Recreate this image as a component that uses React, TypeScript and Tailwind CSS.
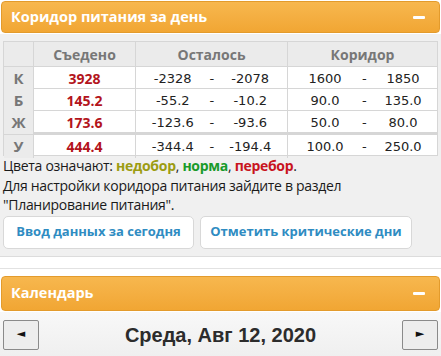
import React from "react"

type Row = { label: string; eaten: string; left: [string, string]; range: [string, string]; last?: boolean }

const rows: Row[] = [
  { label: "К", eaten: "3928", left: ["-2328", "-2078"], range: ["1600", "1850"] },
  { label: "Б", eaten: "145.2", left: ["-55.2", "-10.2"], range: ["90.0", "135.0"] },
  { label: "Ж", eaten: "173.6", left: ["-123.6", "-93.6"], range: ["50.0", "80.0"] },
  { label: "У", eaten: "444.4", left: ["-344.4", "-194.4"], range: ["100.0", "250.0"], last: true },
]

const body = { fontFamily: "'DejaVu Sans', Tahoma, sans-serif" }
const head = { fontFamily: "'Open Sans', 'DejaVu Sans', sans-serif" }

function PanelHeader({ title, tall }: { title: string; tall?: boolean }) {
  return (
    <div
      className={`mx-[1px] flex items-center justify-between rounded-[4px] border border-[#e39b2c] bg-gradient-to-b from-[#f7b74e] to-[#f1a633] pl-[9px] pr-[14px] ${tall ? "h-[35px]" : "h-[32px]"}`}
    >
      <span className="text-[14.5px] font-bold text-white" style={head}>
        {title}
      </span>
      <span className="block h-[3px] w-[12px] rounded-[1px] bg-white" />
    </div>
  )
}

function Pair({ a, b }: { a: string; b: string }) {
  return (
    <div className="flex h-full items-center">
      <span className="w-[74px] text-center">{a}</span>
      <span className="w-[4px] text-center">-</span>
      <span className="w-[74px] text-center">{b}</span>
    </div>
  )
}

export default function App() {
  return (
    <div className="h-[356px] w-[441px] overflow-hidden bg-white pt-[1px] text-[#222]" style={body}>
      <PanelHeader title="Коридор питания за день" />
      <div className="mt-[1px] border-b border-[#dcdcdc] bg-[#f0f0f0] px-[3px] pb-[7px] pt-[7px]">
        <div className="border border-[#d6d6d6] bg-white text-[13px]">
          <div className="grid h-[24px] grid-cols-[30px_102px_152px_1fr] bg-[#ebebeb] text-[14px] font-bold text-[#777]" style={head}>
            <div className="border-r border-[#d6d6d6]" />
            <div className="flex items-center justify-center border-r border-[#d6d6d6]">Съедено</div>
            <div className="flex items-center justify-center border-r border-[#d6d6d6]">Осталось</div>
            <div className="flex items-center justify-center">Коридор</div>
          </div>
          {rows.map((r) => (
            <div
              key={r.label}
              className={`grid grid-cols-[30px_102px_152px_1fr] ${r.last ? "h-[23px] border-t-[3px] border-[#d6d6d6]" : "h-[22px] border-t border-[#d6d6d6]"}`}
            >
              <div className="flex items-center justify-center border-r border-[#d6d6d6] bg-[#ebebeb] text-[15px] font-bold text-[#777]" style={head}>
                {r.label}
              </div>
              <div className="flex items-center justify-center border-r border-[#d6d6d6] text-[14px] font-bold text-[#b3141c]" style={head}>
                {r.eaten}
              </div>
              <div className="border-r border-[#d6d6d6]">
                <Pair a={r.left[0]} b={r.left[1]} />
              </div>
              <Pair a={r.range[0]} b={r.range[1]} />
            </div>
          ))}
        </div>
        <div className="text-[14px] leading-[19.5px] tracking-[-0.3px] text-[#1a1a1a]" style={{ fontFamily: "'Open Sans', sans-serif" }}>
          <div>
            Цвета означают: <b className="text-[#9c9c12]">недобор</b>, <b className="text-[#199a2a]">норма</b>,{" "}
            <b className="text-[#c8141e]">перебор</b>.
          </div>
          <div>Для настройки коридора питания зайдите в раздел</div>
          <div>"Планирование питания".</div>
        </div>
        <div className="mt-[1px] flex gap-[6px]">
          <button className="h-[33px] w-[191px] rounded-[5px] border border-[#d8d8d8] bg-white text-[13px] font-bold text-[#2f8cc2]" style={head}>
            Ввод данных за сегодня
          </button>
          <button className="h-[33px] w-[212px] rounded-[5px] border border-[#d8d8d8] bg-white text-[13px] font-bold text-[#2f8cc2]" style={head}>
            Отметить критические дни
          </button>
        </div>
      </div>
      <div className="mt-[11px] border-t border-[#e2e2e2] pt-[7px]">
        <PanelHeader title="Календарь" tall />
        <div className="mt-[1px] flex h-[46px] items-center justify-between bg-gradient-to-b from-[#f8f8f8] to-[#efefef] px-[3px]">
          <button className="flex h-[30px] w-[36px] items-center justify-center rounded-[2px] border border-[#8a8a8a] bg-[#ededed] text-[11px] text-[#111]">
            ◄
          </button>
          <span className="text-[20px] font-bold text-[#2c2c2c]" style={{ fontFamily: "'Liberation Sans', Arial, sans-serif" }}>
            Среда, Авг 12, 2020
          </span>
          <button className="flex h-[30px] w-[36px] items-center justify-center rounded-[2px] border border-[#8a8a8a] bg-[#ededed] text-[11px] text-[#111]">
            ►
          </button>
        </div>
      </div>
    </div>
  )
}
